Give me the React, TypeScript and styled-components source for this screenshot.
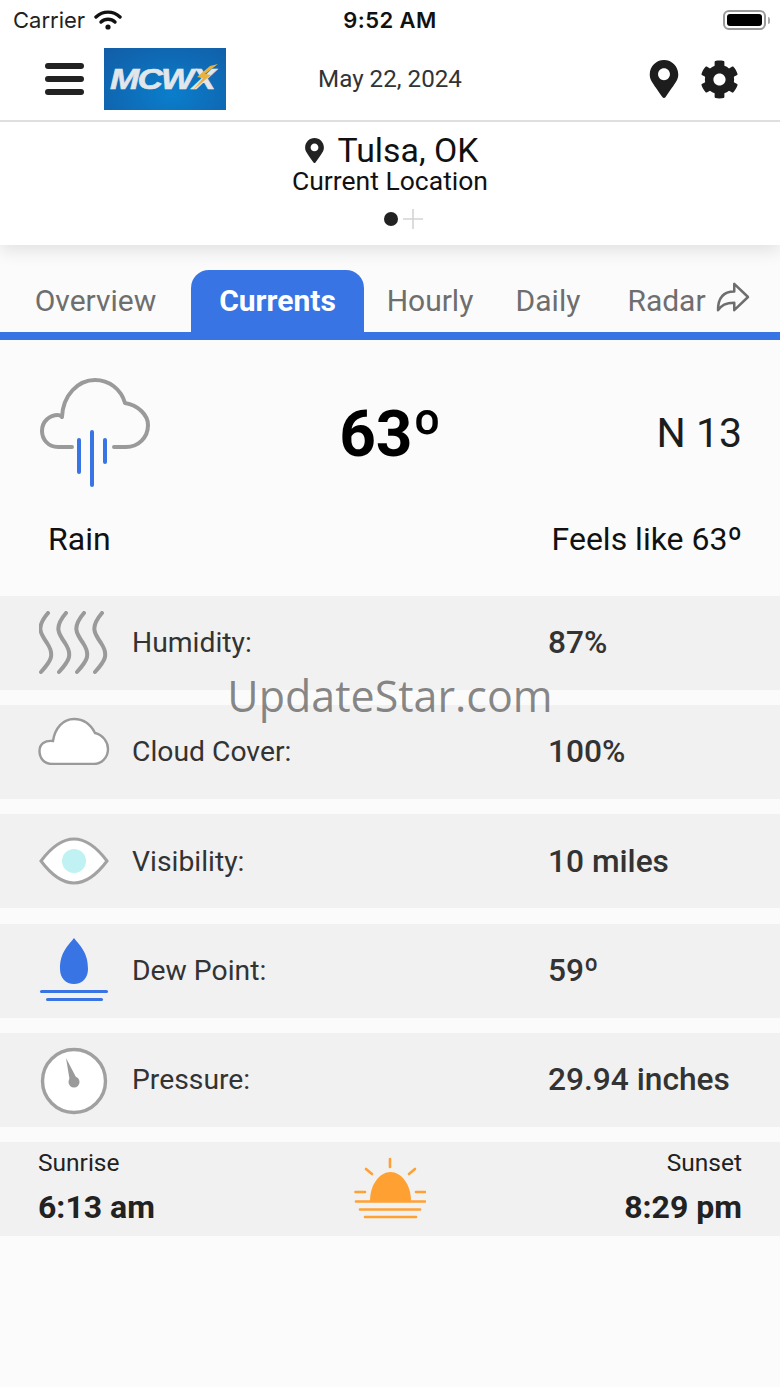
import React from "react";
import styled, { createGlobalStyle } from "styled-components";
import { FaCog, FaMapMarkerAlt } from "react-icons/fa";
import { IoArrowRedoOutline } from "react-icons/io5";

const Global = createGlobalStyle`
  html, body { margin: 0; padding: 0; background: #fbfbfb; }
  * { box-sizing: border-box; }
  body { font-family: Roboto, "Liberation Sans", sans-serif; }
`;

const Page = styled.div`
  position: relative;
  width: 780px;
  height: 1387px;
  overflow: hidden;
  background: #fbfbfb;
  color: #1d1d1d;
`;

const Top = styled.header`
  background: #fff;
  box-shadow: 0 6px 16px rgba(0, 0, 0, 0.1);
  position: relative;
`;

const StatusBar = styled.div`
  height: 40px;
  display: grid;
  grid-template-columns: 1fr auto 1fr;
  align-items: center;
  padding: 0 10px 0 13px;
  font-family: Inter, sans-serif;
  color: #111;
`;

const Carrier = styled.div`
  display: flex;
  align-items: center;
  gap: 9px;
  font-size: 22px;
  color: #222;
`;

const Clock = styled.div`
  font-size: 22px;
  font-weight: 600;
  letter-spacing: 0.4px;
  margin-left: -3px;
`;

const Battery = styled.div`
  justify-self: end;
  display: flex;
  align-items: center;
  gap: 2px;
`;

const BatteryBody = styled.div`
  width: 43px;
  height: 20px;
  border: 2px solid #9a9a9a;
  border-radius: 6px;
  padding: 2px;
  &::after {
    content: "";
    display: block;
    height: 100%;
    background: #000;
    border-radius: 3px;
  }
`;

const BatteryTip = styled.div`
  width: 2px;
  height: 7px;
  background: #a8a8a8;
  border-radius: 0 2px 2px 0;
`;

const NavBar = styled.div`
  height: 82px;
  display: grid;
  grid-template-columns: 1fr auto 1fr;
  align-items: center;
  border-bottom: 2px solid #dfdfdf;
  padding: 0 41px 2px 41px;
`;

const NavLeft = styled.div`
  display: flex;
  align-items: center;
  gap: 20px;
  padding-left: 4px;
`;

const NavRight = styled.div`
  justify-self: end;
  display: flex;
  align-items: center;
  gap: 17px;
  color: #1d1d1d;
`;

const Burger = styled.div`
  display: flex;
  flex-direction: column;
  gap: 7px;
  width: 39px;
`;

const BurgerBar = styled.span`
  display: block;
  height: 6px;
  background: #222;
  border-radius: 3px;
`;

const Logo = styled.div`
  position: relative;
  width: 122px;
  height: 62px;
  background: radial-gradient(ellipse at 55% 75%, #0a7ecb 0%, #0f69b4 60%, #125da6 100%);
  display: flex;
  align-items: center;
  padding-left: 6px;
  overflow: hidden;
`;

const LogoText = styled.span`
  font-family: "Liberation Sans", sans-serif;
  font-size: 29px;
  font-weight: 700;
  font-style: italic;
  color: #e2e6ea;
  letter-spacing: -1.5px;
  -webkit-text-stroke: 0.6px #e2e6ea;
  transform: scaleX(1.21);
  transform-origin: left center;
`;

const LogoBolt = styled.svg`
  position: absolute;
  left: 89px;
  top: 16px;
`;

const DateText = styled.div`
  font-size: 24.2px;
  color: #333;
`;

const LocationPanel = styled.div`
  height: 123px;
  display: flex;
  flex-direction: column;
  align-items: center;
  padding-top: 11px;
`;

const City = styled.div`
  display: flex;
  align-items: center;
  gap: 11px;
  font-size: 33.8px;
  line-height: 35px;
  color: #111;
`;

const Subtitle = styled.div`
  font-size: 26.5px;
  line-height: 28px;
  margin-top: -1px;
  color: #111;
`;

const Pager = styled.div`
  display: flex;
  align-items: center;
  gap: 5px;
  margin-top: 14px;
  margin-left: 26px;
`;

const PagerDot = styled.span`
  width: 14px;
  height: 14px;
  border-radius: 50%;
  background: #222;
`;

const Tabs = styled.nav`
  margin-top: 25px;
  height: 70px;
  display: grid;
  grid-template-columns: 191px 173px 132px 104px 1fr;
  border-bottom: 8px solid #3874e4;
`;

const Tab = styled.div<{ $active?: boolean }>`
  display: flex;
  align-items: center;
  justify-content: center;
  gap: 7px;
  padding-bottom: 1px;
  font-size: 30px;
  font-weight: ${(p) => (p.$active ? 700 : 400)};
  color: ${(p) => (p.$active ? "#fff" : "#6e6e6e")};
  background: ${(p) => (p.$active ? "#3874e4" : "transparent")};
  border-radius: ${(p) => (p.$active ? "18px 18px 0 0" : "0")};
`;

const RadarArrow = styled(IoArrowRedoOutline)`
  margin-top: -7px;
`;

const Summary = styled.section`
  height: 256px;
  padding: 38px 38px 0 40px;
`;

const SummaryTop = styled.div`
  display: grid;
  grid-template-columns: 1fr auto 1fr;
  align-items: center;
  height: 110px;
`;

const Temperature = styled.div`
  font-size: 64px;
  font-weight: 700;
  color: #000;
  margin: 2px 0 0 -1px;
`;

const Wind = styled.div`
  justify-self: end;
  font-size: 41px;
  color: #1d1d1d;
`;

const SummaryBottom = styled.div`
  display: flex;
  justify-content: space-between;
  align-items: center;
  margin-top: 32px;
  padding-left: 8px;
`;

const Condition = styled.div`
  font-size: 32px;
  color: #111;
`;

const FeelsLike = styled.div`
  font-size: 32px;
  color: #111;
`;

const Rows = styled.div`
  display: flex;
  flex-direction: column;
  gap: 15.2px;
`;

const Row = styled.div`
  height: 94px;
  background: #f1f1f1;
  display: grid;
  grid-template-columns: 94px 416px 1fr;
  align-items: center;
  padding: 0 0 0.4px 38px;
`;

const IconCell = styled.div<{ $lift: number }>`
  width: 72px;
  display: flex;
  justify-content: center;
  align-items: center;
  margin-bottom: ${(p) => p.$lift}px;
`;

const Label = styled.div`
  font-size: 28.3px;
  color: #333;
`;

const Value = styled.div`
  font-size: 31.7px;
  font-weight: 500;
  color: #333;
`;

const SunRow = styled.div`
  height: 94px;
  background: #f1f1f1;
  display: grid;
  grid-template-columns: 1fr auto 1fr;
  align-items: center;
  padding: 0 38px;
`;

const SunCell = styled.div<{ $end?: boolean }>`
  display: flex;
  flex-direction: column;
  gap: 12px;
  padding-bottom: 4px;
  align-items: ${(p) => (p.$end ? "flex-end" : "flex-start")};
`;

const SunLabel = styled.div`
  font-size: 24.5px;
  line-height: 28px;
  color: #222;
`;

const SunTime = styled.div`
  font-size: 32px;
  line-height: 36px;
  font-weight: 700;
  color: #222;
`;

const SunArt = styled.div`
  display: flex;
  margin-bottom: 2px;
`;

const Watermark = styled.div`
  position: absolute;
  left: 0;
  right: 0;
  top: 666px;
  text-align: center;
  font-family: "Open Sans", sans-serif;
  font-size: 43px;
  line-height: 60px;
  color: rgba(90, 90, 90, 0.72);
`;

const Wifi = () => (
  <svg width="28" height="20" viewBox="0 0 28 20" fill="none" stroke="#111" strokeLinecap="round">
    <path d="M2 7 C9 0.5 19 0.5 26 7" strokeWidth="3.4" />
    <path d="M7 12 C11 8.3 17 8.3 21 12" strokeWidth="3.4" />
    <circle cx="14" cy="17" r="2.6" fill="#111" stroke="none" />
  </svg>
);

const RainIcon = () => (
  <svg width="110" height="110" viewBox="0 0 110 110" fill="none" strokeLinecap="round">
    <path
      d="M32 69 H18 C8 69 2 61 2 53 C2 43 10 37 18 37 C20 37 21 38 22 39 C23 17 38 2 55 2 C69 2 81 11 85 25 C98 27 108 37 108 47 C108 60 98 69 86 69 H74"
      stroke="#9a9a9a"
      strokeWidth="4"
      strokeLinejoin="round"
    />
    <path d="M39 62 V94" stroke="#3874e4" strokeWidth="4" />
    <path d="M52 54 V107" stroke="#3874e4" strokeWidth="4" />
    <path d="M65 62 V84" stroke="#3874e4" strokeWidth="4" />
  </svg>
);

const HumidityIcon = () => (
  <svg width="70" height="64" viewBox="0 0 70 64" fill="none" stroke="#9a9a9a" strokeWidth="4" strokeLinecap="round">
    {[0, 18, 36, 54].map((x) => (
      <path key={x} d={`M${x + 9} 2 C${x - 3} 16 ${x + 1} 22 ${x + 8} 32 C${x + 16} 44 ${x + 12} 50 ${x + 2} 61`} />
    ))}
  </svg>
);

const CloudIcon = () => (
  <svg width="72" height="48" viewBox="0 0 72 48" fill="#fff" stroke="#9a9a9a" strokeWidth="2.4">
    <path d="M14 47 C6 47 1.5 41 1.5 34 C1.5 27 7 23 15 24 C17 11 25 2 36 2 C46 2 53 8 57 16 C65 18 70 25 70 32 C70 41 63 47 56 47 Z" />
  </svg>
);

const EyeIcon = () => (
  <svg width="70" height="48" viewBox="0 0 70 48">
    <path d="M2 24 C14 8 24 2 35 2 C46 2 56 8 68 24 C56 40 46 46 35 46 C24 46 14 40 2 24 Z" fill="#fff" stroke="#a2a2a2" strokeWidth="3" />
    <circle cx="35" cy="24" r="12" fill="#c0f2f3" />
  </svg>
);

const DewIcon = () => (
  <svg width="70" height="66" viewBox="0 0 70 66" fill="#3874e4">
    <path d="M35 1 C41 9 49 15 49 32 C49 41 43 47 35 47 C27 47 21 41 21 32 C21 15 29 9 35 1 Z" />
    <rect x="1" y="53" width="68" height="3" rx="1.5" />
    <rect x="7" y="61" width="57" height="3" rx="1.5" />
  </svg>
);

const GaugeIcon = () => (
  <svg width="68" height="68" viewBox="0 0 68 68">
    <circle cx="34" cy="34" r="31.5" fill="#fff" stroke="#a0a0a0" strokeWidth="3.4" />
    <path d="M26 11 L38 34 L30 35 Z" fill="#9a9a9a" />
    <circle cx="34" cy="35" r="5.5" fill="#9a9a9a" />
  </svg>
);

const SunsetIcon = () => (
  <svg width="72" height="62" viewBox="0 0 72 62" fill="none" stroke="#ffa033" strokeWidth="2.6" strokeLinecap="round">
    <path d="M36 2 V10" />
    <path d="M12 12 L18 17" />
    <path d="M61 12 L55 17" />
    <path d="M1.5 35 H11" />
    <path d="M62 35 H71" />
    <path d="M16 44 C16 27 26 15 36.5 15 C47 15 57 27 57 44 Z" fill="#ffa033" stroke="none" />
    <path d="M2 44.5 H71" />
    <path d="M6 52.5 H66" />
    <path d="M11 60 H62" />
  </svg>
);

const rows = [
  { label: "Humidity:", value: "87%", icon: <HumidityIcon />, lift: 0 },
  { label: "Cloud Cover:", value: "100%", icon: <CloudIcon />, lift: 22 },
  { label: "Visibility:", value: "10 miles", icon: <EyeIcon />, lift: 1 },
  { label: "Dew Point:", value: "59º", icon: <DewIcon />, lift: 0 },
  { label: "Pressure:", value: "29.94 inches", icon: <GaugeIcon />, lift: -2 },
];

export default function App() {
  return (
    <Page>
      <Global />
      <Top>
        <StatusBar>
          <Carrier>
            Carrier
            <Wifi />
          </Carrier>
          <Clock>9:52 AM</Clock>
          <Battery>
            <BatteryBody />
            <BatteryTip />
          </Battery>
        </StatusBar>
        <NavBar>
          <NavLeft>
            <Burger>
              <BurgerBar />
              <BurgerBar />
              <BurgerBar />
            </Burger>
            <Logo>
              <LogoText>MCWX</LogoText>
              <LogoBolt width="25" height="26" viewBox="0 0 25 26">
                <path d="M25 0 L12 10 L18 11 L0 26 L10 14 L4 13 L17 2 Z" fill="#e8b23c" />
              </LogoBolt>
            </Logo>
          </NavLeft>
          <DateText>May 22, 2024</DateText>
          <NavRight>
            <FaMapMarkerAlt size={38} />
            <FaCog size={39} />
          </NavRight>
        </NavBar>
        <LocationPanel>
          <City>
            <FaMapMarkerAlt size={25} color="#222" />
            Tulsa, OK
          </City>
          <Subtitle>Current Location</Subtitle>
          <Pager>
            <PagerDot />
            <svg width="20" height="20" viewBox="0 0 20 20" stroke="#d4d4d4" strokeWidth="1.6">
              <path d="M0 10 H20 M10 0 V20" />
            </svg>
          </Pager>
        </LocationPanel>
      </Top>
      <Tabs>
        <Tab>Overview</Tab>
        <Tab $active>Currents</Tab>
        <Tab>Hourly</Tab>
        <Tab>Daily</Tab>
        <Tab>
          Radar
          <RadarArrow size={40} />
        </Tab>
      </Tabs>
      <Summary>
        <SummaryTop>
          <RainIcon />
          <Temperature>63º</Temperature>
          <Wind>N 13</Wind>
        </SummaryTop>
        <SummaryBottom>
          <Condition>Rain</Condition>
          <FeelsLike>Feels like 63º</FeelsLike>
        </SummaryBottom>
      </Summary>
      <Rows>
        {rows.map((r) => (
          <Row key={r.label}>
            <IconCell $lift={r.lift}>{r.icon}</IconCell>
            <Label>{r.label}</Label>
            <Value>{r.value}</Value>
          </Row>
        ))}
        <SunRow>
          <SunCell>
            <SunLabel>Sunrise</SunLabel>
            <SunTime>6:13 am</SunTime>
          </SunCell>
          <SunArt>
            <SunsetIcon />
          </SunArt>
          <SunCell $end>
            <SunLabel>Sunset</SunLabel>
            <SunTime>8:29 pm</SunTime>
          </SunCell>
        </SunRow>
      </Rows>
      <Watermark>UpdateStar.com</Watermark>
    </Page>
  );
}
